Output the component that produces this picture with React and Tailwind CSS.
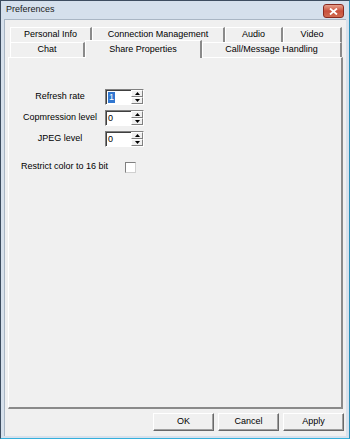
import React from "react";

const font = { fontFamily: '"Liberation Sans", Arial, sans-serif' };

const backTabs = [
  { label: "Personal Info", w: "w-[82px]" },
  { label: "Connection Management", w: "w-[133px]" },
  { label: "Audio", w: "w-[58px]" },
  { label: "Video", w: "w-[59px]" },
];

const frontTabs = [
  { label: "Chat", w: "w-[75px]" },
  { label: "Share Properties", w: "w-[117px]", active: true },
  { label: "Call/Message Handling", w: "w-[140px]" },
];

const Tab = ({ label, w, active }) =>
  active ? (
    <div
      className={`${w} h-[18px] -mt-[2px] -mb-[1px] relative z-10 flex items-center justify-center bg-[#f0f0f0] border-l border-t border-white border-r-2 border-r-[#8a8a8a] text-[9px] text-black`}
    >
      {label}
    </div>
  ) : (
    <div
      className={`${w} h-[15px] flex items-center justify-center bg-[#f0f0f0] border-l border-t border-white border-r-2 border-r-[#8a8a8a] text-[9px] text-black`}
    >
      {label}
    </div>
  );

const SpinBox = ({ value, selected }) => (
  <div className="w-[39px] h-[16px] flex bg-white border-t border-l border-[#808080] border-r border-b border-r-white border-b-white shadow-[inset_1px_1px_0_#404040]">
    <div className="flex-1 flex items-center pl-[2px] text-[9px]">
      {selected ? (
        <span className="bg-[#3177d0] text-white px-[1px] leading-[11px]">{value}</span>
      ) : (
        <span className="leading-[11px]">{value}</span>
      )}
    </div>
    <div className="w-[12px] flex flex-col">
      <div className="flex-1 flex items-center justify-center bg-[#f0f0f0] border-t border-l border-white border-r border-b border-r-[#808080] border-b-[#808080]">
        <svg width="5" height="3" viewBox="0 0 5 3">
          <path d="M2.5 0 L5 3 L0 3 Z" fill="#000" />
        </svg>
      </div>
      <div className="flex-1 flex items-center justify-center bg-[#f0f0f0] border-t border-l border-white border-r border-b border-r-[#808080] border-b-[#808080]">
        <svg width="5" height="3" viewBox="0 0 5 3">
          <path d="M0 0 L5 0 L2.5 3 Z" fill="#000" />
        </svg>
      </div>
    </div>
  </div>
);

const Button = ({ children }) => (
  <button className="w-[61px] h-[18px] flex items-center justify-center bg-[#f0f0f0] border border-t-white border-l-white border-r-[#696969] border-b-[#696969] shadow-[inset_-1px_-1px_0_#a0a0a0] text-[9px] text-black">
    {children}
  </button>
);

export default function App() {
  const rows = [
    { label: "Refresh rate", value: "1", selected: true },
    { label: "Copmression level", value: "0" },
    { label: "JPEG level", value: "0" },
  ];

  return (
    <div
      style={font}
      className="w-[350px] h-[439px] flex flex-col bg-[#d7e1ec] border border-[#3d4d60] border-r-[#2a8fb8] border-b-[#35b0dc]"
    >
      {/* Title bar */}
      <div className="h-[18px] flex items-center justify-between pl-[5px] pr-[5px] bg-[#d5e0ec]">
        <span className="text-[9px] text-[#1a1a1a]">Preferences</span>
        <div className="w-[21px] h-[14px] mt-[2px] flex items-center justify-center rounded-[3px] border border-[#8a2a20] bg-gradient-to-b from-[#e6a08c] via-[#c8503c] to-[#d06a50]">
          <svg width="9" height="7" viewBox="0 0 9 7">
            <path d="M1 0.5 L8 6.5 M8 0.5 L1 6.5" stroke="#fff" strokeWidth="1.8" />
          </svg>
        </div>
      </div>

      {/* Client area */}
      <div className="flex-1 flex flex-col mx-[3px] mb-[2px] bg-[#f0f0f0] border-l border-t border-[#a9b6c4]">
        <div className="flex flex-col mx-[3px] mt-[7px]">
          <div className="flex ml-[2px]">
            {backTabs.map((t) => (
              <Tab key={t.label} {...t} />
            ))}
          </div>
          <div className="flex ml-[2px]">
            {frontTabs.map((t) => (
              <Tab key={t.label} {...t} />
            ))}
          </div>
        </div>

        {/* Tab panel */}
        <div className="h-[352px] mx-[3px] border-l border-t border-white border-r-2 border-b-2 border-r-[#8a8a8a] border-b-[#8a8a8a] pt-[31px] pl-[12px]">
          <div className="flex flex-col gap-[5px]">
            {rows.map((r) => (
              <div key={r.label} className="flex items-center h-[16px]">
                <span className="w-[78px] text-center text-[9px] text-black">{r.label}</span>
                <div className="ml-[6px]">
                  <SpinBox value={r.value} selected={r.selected} />
                </div>
              </div>
            ))}
          </div>
          <div className="flex items-center mt-[14px] h-[12px]">
            <span className="w-[104px] text-[9px] text-black">Restrict color to 16 bit</span>
            <div className="w-[11px] h-[11px] bg-white border border-t-[#808080] border-l-[#808080] border-r-[#d0d0d0] border-b-[#d0d0d0]" />
          </div>
        </div>

        {/* Buttons */}
        <div className="flex justify-end gap-[4px] mt-[4px] pr-[2px]">
          <Button>OK</Button>
          <Button>Cancel</Button>
          <Button>Apply</Button>
        </div>
      </div>
    </div>
  );
}
